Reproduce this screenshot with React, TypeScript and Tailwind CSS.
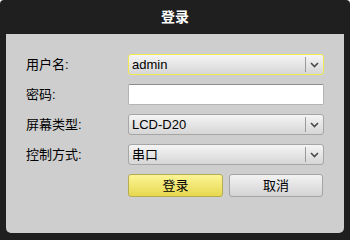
import React from "react";

const font = { fontFamily: '"Liberation Sans", "Noto Sans CJK SC", sans-serif' };

const Chevron = () => (
  <svg width="9" height="6" viewBox="0 0 9 6" className="block">
    <path d="M1 1 L4.5 4.5 L8 1" fill="none" stroke="#4a4a4a" strokeWidth="1.6" />
  </svg>
);

interface SelectProps {
  value: string;
  active?: boolean;
}

const FakeSelect = ({ value, active }: SelectProps) => (
  <div
    className={`flex h-[21px] w-[196px] items-stretch rounded-[3px] border bg-gradient-to-b from-[#f5f5f5] to-[#d6d6d6] ${
      active ? "border-[#f2ea4e]" : "border-[#a6a6a6]"
    }`}
  >
    <div className="flex flex-1 items-center pl-[3px] text-[13px] text-black">{value}</div>
    <div className="my-[2px] w-px bg-[#9a9a9a]" />
    <div className="flex w-[17px] items-center justify-center">
      <Chevron />
    </div>
  </div>
);

const Row = ({ label, children }: { label: string; children: React.ReactNode }) => (
  <div className="flex h-[21px] items-center">
    <div className="w-[102px] text-[13px] text-black">{label}</div>
    {children}
  </div>
);

const App = () => {
  return (
    <div className="h-[240px] w-[350px] bg-white" style={font}>
      <div className="flex h-full flex-col rounded-t-[4px] bg-[#1f1f1f]">
        <div className="flex h-[34px] items-center justify-center text-[14px] font-bold text-white">
          登录
        </div>
        <div className="mx-[6px] flex h-[199px] flex-col gap-[9px] rounded-b-[5px] bg-[#cecece] pl-[20px] pt-[20px]">
          <Row label="用户名:">
            <FakeSelect value="admin" active />
          </Row>
          <Row label="密码:">
            <div className="h-[21px] w-[196px] rounded-[2px] border border-[#b4b4b4] border-t-[#8c8c8c] bg-white" />
          </Row>
          <Row label="屏幕类型:">
            <FakeSelect value="LCD-D20" />
          </Row>
          <Row label="控制方式:">
            <FakeSelect value="串口" />
          </Row>
          <div className="flex gap-[6px] pl-[102px]">
            <button className="h-[23px] w-[95px] rounded-[3px] border border-[#b5ad55] bg-gradient-to-b from-[#fcf594] to-[#e7d84c] text-[13px] text-black">
              登录
            </button>
            <button className="h-[23px] w-[94px] rounded-[3px] border border-[#a4a4a4] bg-gradient-to-b from-[#f3f3f3] to-[#d3d3d3] text-[13px] text-black">
              取消
            </button>
          </div>
        </div>
      </div>
    </div>
  );
};

export default App;
